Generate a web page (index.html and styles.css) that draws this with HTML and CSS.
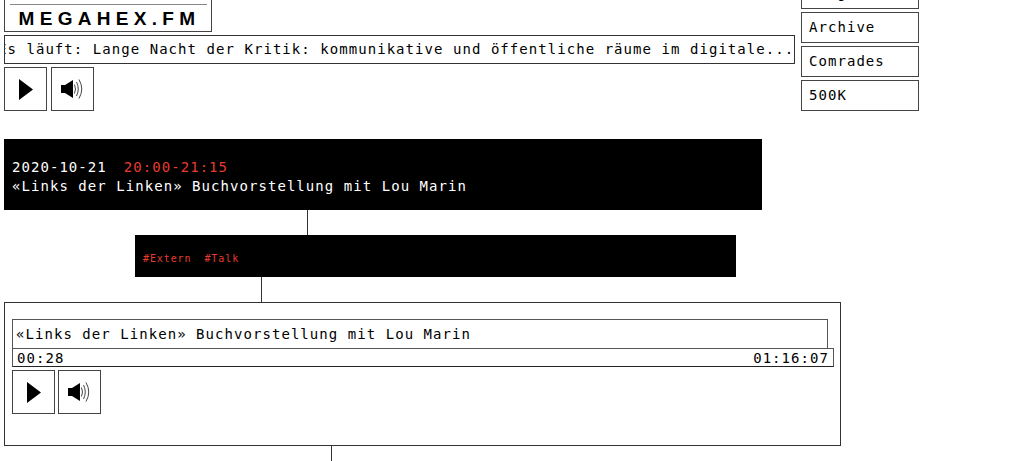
FILE: index.html
```html
<!DOCTYPE html>
<html lang="de">
<head>
    <meta charset="UTF-8">
    <title>Megahex.fm</title>
    <link rel="stylesheet" href="styles.css">
</head>
<body>
    <div class="page">
        <header class="top">
            <div class="top-left">
                <div class="logo"><span class="logo-line"></span><span class="logo-text">MEGAHEX.FM</span></div>
                <div class="ticker"><span>Es läuft: Lange Nacht der Kritik: kommunikative und öffentliche räume im digitale...</span></div>
                <div class="controls controls-wide">
                    <button class="ctl"><svg width="14" height="21" viewBox="0 0 14 21"><path d="M0 0 L14 10.5 L0 21 Z" fill="#000"/></svg></button>
                    <button class="ctl"><svg width="24" height="22" viewBox="0 0 24 22"><path d="M0 7 H4 L12 2 V20 L4 15 H0 Z" fill="#000"/><path d="M13.5 6.5 Q15.5 11 13.5 15.5 M15.5 4 Q19 11 15.5 18 M18 1.5 Q23.5 11 18 20.5" fill="none" stroke="#444" stroke-width="1"/></svg></button>
                </div>
            </div>
            <nav class="nav">
                <a class="nav-item">Programm</a>
                <a class="nav-item">Archive</a>
                <a class="nav-item">Comrades</a>
                <a class="nav-item">500K</a>
            </nav>
        </header>

        <section class="event-head">
            <div><span>2020-10-21</span><span class="time">20:00-21:15</span></div>
            <div>«Links der Linken» Buchvorstellung mit Lou Marin</div>
        </section>
        <div class="wire wire-one"></div>
        <section class="event-tags"><span>#Extern</span><span>#Talk</span></section>
        <div class="wire wire-two"></div>
        <section class="player">
            <div class="track">«Links der Linken» Buchvorstellung mit Lou Marin</div>
            <div class="progress"><span>00:28</span><span>01:16:07</span></div>
            <div class="controls">
                <button class="ctl"><svg width="14" height="21" viewBox="0 0 14 21"><path d="M0 0 L14 10.5 L0 21 Z" fill="#000"/></svg></button>
                <button class="ctl"><svg width="24" height="22" viewBox="0 0 24 22"><path d="M0 7 H4 L12 2 V20 L4 15 H0 Z" fill="#000"/><path d="M13.5 6.5 Q15.5 11 13.5 15.5 M15.5 4 Q19 11 15.5 18 M18 1.5 Q23.5 11 18 20.5" fill="none" stroke="#444" stroke-width="1"/></svg></button>
            </div>
        </section>
        <div class="wire wire-three"></div>
    </div>
</body>
</html>
```

FILE: styles.css
```css
html, body {
    margin: 0;
    padding: 0;
    height: 461px;
    overflow: hidden;
    background-color: #fff;
}
body {
    font-family: "DejaVu Sans Mono", monospace;
    font-size: 14px;
    letter-spacing: 1.05px;
    color: #000;
}
.page {
    margin-top: -12px;
    padding-left: 4px;
}
.top {
    display: flex;
    height: 123px;
    margin-bottom: 28px;
}
.top-left {
    width: 791px;
}
.logo {
    width: 208px;
    height: 44px;
    border: 1px solid #444;
    display: flex;
    flex-direction: column;
    align-items: center;
    justify-content: flex-end;
    box-sizing: border-box;
}
.logo-line {
    width: 197px;
    height: 1px;
    background-color: #888;
    margin-bottom: 3px;
}
.logo-text {
    font-family: "Liberation Sans", sans-serif;
    font-weight: bold;
    font-size: 19px;
    letter-spacing: 5.3px;
    line-height: 22px;
    margin-left: 3px;
    margin-bottom: 1px;
}
.ticker {
    margin-top: 3px;
    height: 29px;
    border: 1px solid #333;
    box-sizing: border-box;
    overflow: hidden;
    white-space: nowrap;
    line-height: 26px;
}
.ticker span {
    display: block;
    margin-left: -7px;
}
.controls {
    display: flex;
    gap: 3px;
    margin-top: 3px;
}
.controls-wide {
    gap: 4px;
}
.ctl {
    width: 43px;
    height: 44px;
    padding: 0;
    background: #fff;
    border: 1px solid #444;
    display: flex;
    align-items: center;
    justify-content: center;
}
.nav {
    margin-left: 6px;
    display: flex;
    flex-direction: column;
    justify-content: flex-end;
    gap: 3px;
}
.nav-item {
    flex: none;
    width: 118px;
    height: 31px;
    box-sizing: border-box;
    border: 1px solid #444;
    padding-left: 7px;
    line-height: 28px;
}
.event-head {
    background-color: #000;
    color: #fff;
    width: 758px;
    height: 71px;
    box-sizing: border-box;
    padding-top: 19px;
    padding-left: 8px;
    line-height: 19px;
}
.event-head .time {
    color: #e63b2e;
    margin-left: 17px;
}
.wire {
    width: 1px;
    background-color: #333;
}
.wire-one {
    height: 25px;
    margin-left: 303px;
}
.event-tags {
    background-color: #000;
    color: #e63b2e;
    width: 601px;
    height: 42px;
    margin-left: 131px;
    box-sizing: border-box;
    padding: 18px 8px 0;
    font-size: 10px;
    letter-spacing: 0.9px;
    display: flex;
    gap: 13px;
}
.wire-two {
    height: 25px;
    margin-left: 257px;
}
.player {
    width: 837px;
    height: 144px;
    box-sizing: border-box;
    border: 1px solid #333;
    padding: 16px 7px 0;
}
.track {
    width: 816px;
    height: 30px;
    box-sizing: border-box;
    border: 1px solid #555;
    padding-left: 3px;
    line-height: 29px;
}
.progress {
    width: 822px;
    height: 19px;
    box-sizing: border-box;
    border: 1px solid #555;
    border-bottom-color: #222;
    margin-top: -1px;
    padding: 0 4px;
    display: flex;
    justify-content: space-between;
    line-height: 18px;
}
.wire-three {
    height: 20px;
    margin-left: 327px;
}
```
